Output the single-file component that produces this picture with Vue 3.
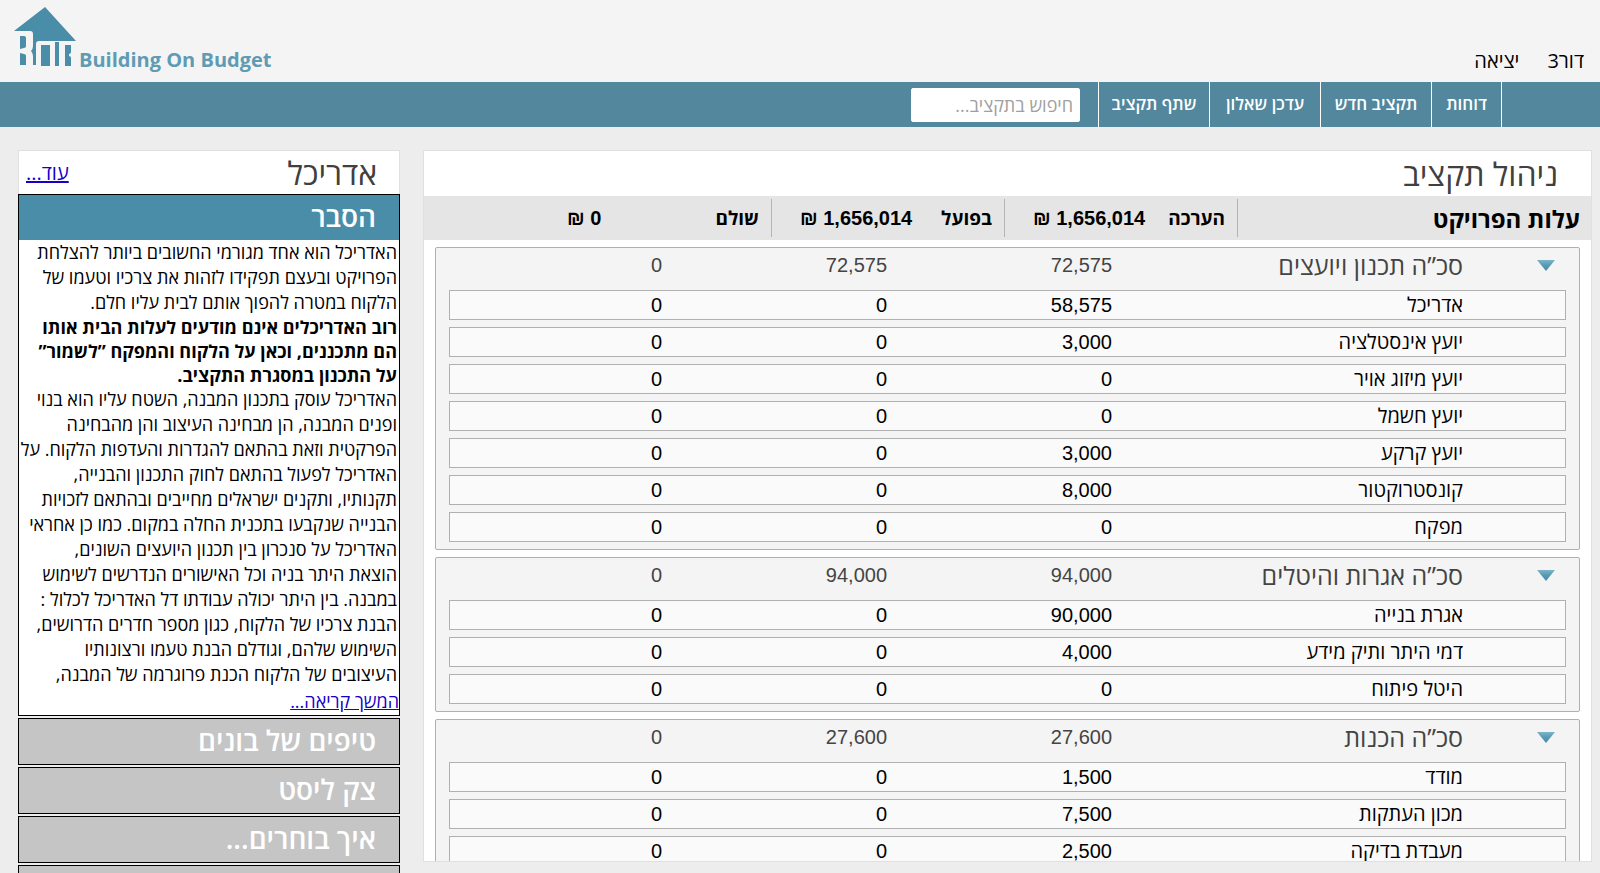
<script setup>
import { ref } from 'vue'

const search = ref('')

const menu = [
  { label: 'דוחות', size: 'short' },
  { label: 'תקציב חדש', size: 'long' },
  { label: 'עדכן שאלון', size: 'long' },
  { label: 'שתף תקציב', size: 'long' },
]

const totals = [
  { label: 'הערכה', value: '1,656,014' },
  { label: 'בפועל', value: '1,656,014' },
  { label: 'שולם', value: '0' },
]

const groups = ref([
  {
    name: 'סכ”ה תכנון ויועצים',
    sums: ['72,575', '72,575', '0'],
    open: true,
    rows: [
      ['אדריכל', '58,575', '0', '0'],
      ['יועץ אינסטלציה', '3,000', '0', '0'],
      ['יועץ מיזוג אויר', '0', '0', '0'],
      ['יועץ חשמל', '0', '0', '0'],
      ['יועץ קרקע', '3,000', '0', '0'],
      ['קונסטרוקטור', '8,000', '0', '0'],
      ['מפקח', '0', '0', '0'],
    ],
  },
  {
    name: 'סכ”ה אגרות והיטלים',
    sums: ['94,000', '94,000', '0'],
    open: true,
    rows: [
      ['אגרת בנייה', '90,000', '0', '0'],
      ['דמי היתר ותיק מידע', '4,000', '0', '0'],
      ['היטל פיתוח', '0', '0', '0'],
    ],
  },
  {
    name: 'סכ”ה הכנות',
    sums: ['27,600', '27,600', '0'],
    open: true,
    rows: [
      ['מודד', '1,500', '0', '0'],
      ['מכון העתקות', '7,500', '0', '0'],
      ['מעבדת בדיקה', '2,500', '0', '0'],
    ],
  },
])

const paragraphs = [
  {
    strong: false,
    lines: [
      'האדריכל הוא אחד מגורמי החשובים ביותר להצלחת',
      'הפרויקט ובעצם תפקידו לזהות את צרכיו וטעמו של',
      'הלקוח במטרה להפוך אותם לבית עליו חלם.',
    ],
  },
  {
    strong: true,
    lines: [
      'רוב האדריכלים אינם מודעים לעלות הבית אותו',
      'הם מתכננים, וכאן על הלקוח והמפקח ”לשמור”',
      'על התכנון במסגרת התקציב.',
    ],
  },
  {
    strong: false,
    lines: [
      'האדריכל עוסק בתכנון המבנה, השטח עליו הוא בנוי',
      'ופנים המבנה, הן מבחינה העיצוב והן מהבחינה',
      'הפרקטית וזאת בהתאם להגדרות והעדפות הלקוח. על',
      'האדריכל לפעול בהתאם לחוק התכנון והבנייה,',
      'תקנותיו, ותקנים ישראלים מחייבים ובהתאם לזכויות',
      'הבנייה שנקבעו בתכנית החלה במקום. כמו כן אחראי',
      'האדריכל על סנכרון בין תכנון היועצים השונים,',
      'הוצאת היתר בניה וכל האישורים הנדרשים לשימוש',
      'במבנה. בין היתר יכולה עבודתו דל האדריכל לכלול :',
      'הבנת צרכיו של הלקוח, כגון מספר חדרים הדרושים,',
      'השימוש שלהם, וגודלם הבנת טעמו ורצונותיו',
      'העיצובים של הלקוח הכנת פרוגרמה של המבנה,',
    ],
  },
]

const sections = ['טיפים של בונים', 'צק ליסט', 'איך בוחרים...']
</script>

<template>
  <div class="page" dir="rtl" lang="he">
    <header class="top">
      <nav class="account">
        <a href="#">דור3</a>
        <a href="#">יציאה</a>
      </nav>
      <a class="brand" href="#" dir="ltr">
        <svg class="house" viewBox="0 0 62 60" aria-hidden="true">
          <path d="M31 0 L62 34 H25 Q22 34 22 37 V58 H19 V49 Q19 46 17 44 Q19 42 19 39 V27 Q19 24 16 24 H0 Z" />
          <path d="M6 29 H10 Q12 29 12 31 V39 Q12 41 10 41 L6 42 Z" />
          <path d="M6 46 L10 47 Q12 47 12 49 V58 H6 Z" />
          <path d="M27 38 H36 V59 H27 Z" />
          <path d="M41 35 H45 V59 H41 Z" />
          <path d="M51 38 H57 V45 Q57 47 55 47 V49 Q57 49 57 51 V59 H51 Z" />
        </svg>
        <span>Building On Budget</span>
      </a>
    </header>

    <div class="bar">
      <nav class="menu">
        <a v-for="item in menu" :key="item.label" href="#" :class="item.size">{{ item.label }}</a>
      </nav>
      <input v-model="search" class="search" type="search" placeholder="חיפוש בתקציב..." aria-label="חיפוש בתקציב" />
    </div>

    <div class="content">
      <main class="budget">
        <h1 class="title">ניהול תקציב</h1>
        <div class="summary">
          <h2>עלות הפרויקט</h2>
          <div v-for="t in totals" :key="t.label" class="total">
            <span class="label">{{ t.label }}</span>
            <span class="value">{{ t.value }} ₪</span>
          </div>
        </div>
        <div class="groups">
          <section v-for="g in groups" :key="g.name" class="group">
            <table>
              <colgroup>
                <col class="c-name" />
                <col class="c-num" />
                <col class="c-num" />
                <col />
              </colgroup>
              <thead>
                <tr>
                  <th scope="col">
                    <div class="head">
                      <button type="button" :aria-label="g.name" :aria-expanded="g.open" @click="g.open = !g.open">
                        <svg viewBox="0 0 18 11" aria-hidden="true">
                          <defs>
                            <linearGradient id="arrow" x1="0" y1="0" x2="0" y2="1">
                              <stop offset="0" stop-color="#7db4c8" />
                              <stop offset="0.5" stop-color="#5599b2" />
                              <stop offset="1" stop-color="#4a8ba4" />
                            </linearGradient>
                          </defs>
                          <path d="M0 0 H18 L9 11 Z" fill="url(#arrow)" />
                        </svg>
                      </button>
                      <span>{{ g.name }}</span>
                    </div>
                  </th>
                  <th v-for="(s, i) in g.sums" :key="i" scope="col" class="num">{{ s }}</th>
                </tr>
              </thead>
              <tbody v-if="g.open">
                <tr v-for="r in g.rows" :key="r[0]">
                  <td class="name">{{ r[0] }}</td>
                  <td class="num">{{ r[1] }}</td>
                  <td class="num">{{ r[2] }}</td>
                  <td class="num">{{ r[3] }}</td>
                </tr>
              </tbody>
            </table>
          </section>
        </div>
      </main>

      <aside class="guide">
        <div class="guide-title">
          <h2>אדריכל</h2>
          <a href="#">עוד...</a>
        </div>
        <section class="open">
          <h3><button type="button">הסבר</button></h3>
          <div class="text">
            <p v-for="(p, i) in paragraphs" :key="i" :class="{ strong: p.strong }">
              <template v-for="line in p.lines" :key="line">{{ line }}<br /></template>
            </p>
          </div>
          <a class="more" href="#">המשך קריאה...</a>
        </section>
        <button v-for="s in sections" :key="s" type="button" class="closed">{{ s }}</button>
        <div class="closed"></div>
      </aside>
    </div>
  </div>
</template>

<style>
body {
  margin: 0;
  background: #ededed;
}
</style>

<style scoped>
.page {
  display: flex;
  flex-direction: column;
  height: 100vh;
  overflow: hidden;
  box-sizing: border-box;
  background: #ededed;
  color: #000;
  font-family: "Open Sans", "DejaVu Sans", sans-serif;
  font-size: 20px;
  font-weight: 500;
}
h1, h2, h3, p {
  margin: 0;
  font-weight: 500;
}
button {
  font: inherit;
  border: 0;
  padding: 0;
  background: none;
  cursor: pointer;
}
a {
  color: #1500c8;
}
.top {
  flex: none;
  display: flex;
  justify-content: space-between;
  align-items: flex-end;
  height: 82px;
  padding: 0 16px 0 14px;
  box-sizing: border-box;
  background: #f4f4f4;
}
.account {
  display: flex;
  gap: 28px;
  padding-bottom: 9px;
  line-height: 24px;
}
.account a {
  color: #000;
  text-decoration: none;
}
.brand {
  display: flex;
  align-items: flex-end;
  gap: 3px;
  padding-bottom: 15px;
  color: #5f9bb3;
  font-weight: 700;
  line-height: 14px;
  text-decoration: none;
}
.house {
  width: 62px;
  height: 60px;
  fill: #4a8da8;
}
.bar {
  flex: none;
  display: flex;
  align-items: center;
  gap: 18px;
  height: 45px;
  padding-right: 98px;
  background: #52879d;
}
.menu {
  display: flex;
  align-self: stretch;
  border-right: 1px solid #fff;
}
.menu a {
  box-sizing: border-box;
  border-left: 1px solid #fff;
  color: #fff;
  font-size: 17px;
  font-weight: 600;
  line-height: 43px;
  text-align: center;
  text-decoration: none;
  white-space: nowrap;
}
.menu .short {
  width: 70px;
}
.menu .long {
  width: 111px;
}
.search {
  box-sizing: border-box;
  width: 169px;
  height: 34px;
  padding: 0 6px;
  border: 1px solid #fff;
  border-radius: 2px;
  background: #fff;
  font: inherit;
  font-size: 18px;
  appearance: none;
}
.search::placeholder {
  color: #a0a0a0;
}
.content {
  flex: 1;
  min-height: 0;
  display: flex;
  gap: 23px;
  padding: 23px 8px 0 18px;
}
.budget {
  flex: 1;
  min-width: 0;
  display: flex;
  flex-direction: column;
  margin-bottom: 11px;
  border: 1px solid #e0e0e0;
  background: #fff;
  overflow: hidden;
}
.title {
  flex: none;
  padding-right: 33px;
  color: #404040;
  font-size: 32px;
  line-height: 45px;
}
.summary {
  flex: none;
  display: flex;
  align-items: center;
  height: 44px;
  background: #e5e5e5;
}
.summary h2 {
  width: 353px;
  box-sizing: border-box;
  padding-right: 11px;
  font-size: 24px;
  font-weight: 700;
}
.total {
  display: flex;
  justify-content: space-between;
  align-items: center;
  box-sizing: border-box;
  width: 233px;
  height: 38px;
  padding: 0 12px 0 28px;
  border-right: 1px solid #b4b4b4;
  font-weight: 700;
}
.label {
  font-size: 19px;
}
.value {
  font-family: "Liberation Sans", "Open Sans", sans-serif;
  font-size: 20px;
}
.groups {
  display: flex;
  flex-direction: column;
  gap: 7px;
  padding: 7px 11px 0;
}
.group {
  border: 1px solid #b0b0b0;
  border-radius: 2px;
  padding: 0 13px;
  background: #f4f4f4;
}
table {
  width: 100%;
  table-layout: fixed;
  border-collapse: separate;
  border-spacing: 0 7px;
  margin-top: -7px;
}
.c-name {
  width: 454px;
}
.c-num {
  width: 225px;
}
th {
  height: 35px;
  padding: 0;
  box-sizing: border-box;
  color: #444;
  font-size: 25px;
  font-weight: 500;
  line-height: 35px;
  text-align: right;
}
.head {
  display: flex;
  align-items: center;
  gap: 74px;
  padding-right: 11px;
}
.head button {
  width: 18px;
  height: 11px;
  display: flex;
}
.head svg {
  width: 18px;
  height: 11px;
}
.num {
  font-family: "Liberation Sans", sans-serif;
  font-size: 20px;
  font-weight: 400;
  text-align: right;
}
td {
  height: 28px;
  padding: 0;
  border: 1px solid #b0b0b0;
  border-width: 1px 0;
  background: #fafafa;
  line-height: 28px;
}
td:first-child {
  border-right-width: 1px;
}
td:last-child {
  border-left-width: 1px;
}
.name {
  padding-right: 102px;
}
.guide {
  flex: none;
  width: 382px;
}
.guide-title {
  display: flex;
  justify-content: space-between;
  align-items: center;
  height: 43px;
  padding: 0 22px 0 7px;
  border: 1px solid #e0e0e0;
  border-bottom: 0;
  background: #fff;
}
.guide-title h2 {
  color: #404040;
  font-size: 32px;
  line-height: 43px;
}
.open {
  border: 1px solid #000;
  background: #fff;
}
.open h3 button {
  display: block;
  width: 100%;
  height: 45px;
  padding: 0 23px 2px 0;
  background: #4a8da8;
  color: #fff;
  font-size: 28px;
  font-weight: 600;
  line-height: 43px;
  text-align: right;
}
.text {
  padding: 0 2px 0 0;
  font-size: 18px;
  line-height: 25px;
  white-space: nowrap;
}
.strong {
  font-weight: 700;
  line-height: 24px;
}
.more {
  display: block;
  font-size: 18px;
  line-height: 28px;
}
.closed {
  display: block;
  width: 100%;
  height: 47px;
  box-sizing: border-box;
  margin-top: 2px;
  padding: 0 23px 2px 0;
  border: 1px solid #000;
  background: #c5c5c5;
  color: #fff;
  font-size: 28px;
  font-weight: 600;
  line-height: 43px;
  text-align: right;
}
</style>
